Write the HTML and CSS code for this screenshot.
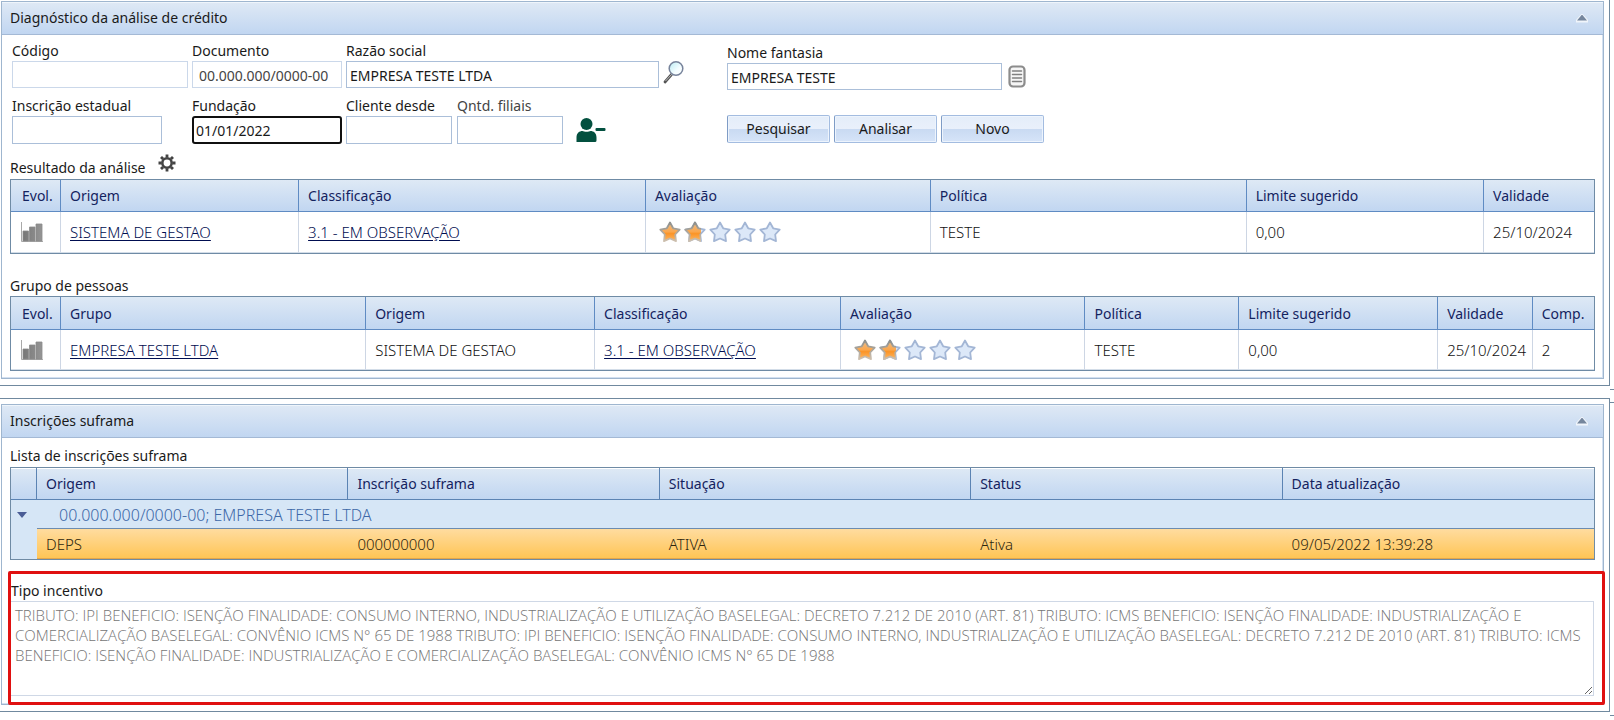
FILE: index.html
```html
<!DOCTYPE html>
<html lang="pt-BR">
<head>
<meta charset="utf-8">
<title>Análise de crédito</title>
<link rel="stylesheet" href="styles.css">
</head>
<body>
<svg class="defs" aria-hidden="true">
  <defs>
    <linearGradient id="gold" x1="0" y1="0" x2="0" y2="1">
      <stop offset="0" stop-color="#e9bd8c"/><stop offset=".5" stop-color="#fba64c"/><stop offset=".6" stop-color="#fb9426"/><stop offset="1" stop-color="#fdb866"/>
    </linearGradient>
    <linearGradient id="goldEdge" x1="0" y1="0" x2="0" y2="1">
      <stop offset="0" stop-color="#8d8f8c"/><stop offset="1" stop-color="#cdbfae"/>
    </linearGradient>
    <linearGradient id="bar" x1="0" y1="0" x2="1" y2="0">
      <stop offset="0" stop-color="#777"/><stop offset="1" stop-color="#959595"/>
    </linearGradient>
    <linearGradient id="lens" x1="0" y1="0" x2="1" y2="1">
      <stop offset="0" stop-color="#b9ecf3"/><stop offset=".6" stop-color="#f4fdff"/><stop offset="1" stop-color="#fff"/>
    </linearGradient>
    <path id="star" d="M11 1.500 L14.200 7.300 L20.700 8.600 L16.200 13.500 L17 20.100 L11 17.500 L5 20.100 L5.800 13.500 L1.300 8.600 L7.800 7.300 Z"/>
    <clipPath id="most"><rect width="17" height="22"/></clipPath>
    <symbol id="off" viewBox="0 0 22 22"><use href="#star" fill="#dce8f8" stroke="#a3b6d5" stroke-width="1.800" stroke-linejoin="round"/></symbol>
    <symbol id="on" viewBox="0 0 22 22"><use href="#star" fill="url(#gold)" stroke="url(#goldEdge)" stroke-width="1.800" stroke-linejoin="round"/></symbol>
    <symbol id="rating" viewBox="0 0 122 22">
      <use href="#on" width="22" height="22"/>
      <use href="#off" x="25" width="22" height="22"/>
      <g transform="translate(25 0)" clip-path="url(#most)"><use href="#on" width="22" height="22"/></g>
      <use href="#off" x="50" width="22" height="22"/>
      <use href="#off" x="75" width="22" height="22"/>
      <use href="#off" x="100" width="22" height="22"/>
    </symbol>
    <symbol id="chart" viewBox="0 0 22 20">
      <path d="M.5 0V19.500H22" fill="none" stroke="#a9a9a9"/>
      <path d="M2 9h5.500V19H2zM8.500 5h5.500v14H8.500zM15 2h6v17h-6z" fill="url(#bar)" stroke="#8c8c8c" stroke-width=".8"/>
    </symbol>
  </defs>
</svg>

<main class="page">
  <div class="frame">
    <section class="panel">
      <header class="panel-head"><h2>Diagnóstico da análise de crédito</h2><button class="toggle" type="button" aria-label="Recolher"></button></header>
      <div class="panel-body">
        <form class="filters">
          <div class="left">
            <div class="row">
              <div class="field w-code"><label for="codigo">Código</label><input id="codigo" class="soft" readonly></div>
              <div class="field w-doc"><label for="doc">Documento</label><input id="doc" class="soft indent" value="00.000.000/0000-00" readonly></div>
              <div class="field w-name"><label for="razao">Razão social</label><input id="razao" value="EMPRESA TESTE LTDA"></div>
              <button class="icon" type="button" aria-label="Buscar">
                <svg width="22" height="24" viewBox="0 0 22 24"><path d="M8.500 14.500L2 22" stroke="#555" stroke-width="2.800" stroke-linecap="round"/><path d="M9 14L2.500 21" stroke="#bbb" stroke-width="1"/><circle cx="13" cy="8.500" r="6.800" fill="url(#lens)" stroke="#77839b" stroke-width="1.500"/></svg>
              </button>
            </div>
            <div class="row">
              <div class="field w-code"><label for="ie">Inscrição estadual</label><input id="ie" class="w-150"></div>
              <div class="field w-doc"><label for="fund">Fundação</label><input id="fund" class="active" value="01/01/2022"></div>
              <div class="field w-small"><label for="cli">Cliente desde</label><input id="cli"></div>
              <div class="field w-small"><label class="gray" for="fil">Qntd. filiais</label><input id="fil"></div>
              <button class="icon person" type="button" aria-label="Remover pessoa">
                <svg width="30" height="26" viewBox="0 0 30 26"><g fill="#03503f"><circle cx="10.500" cy="7" r="6"/><path d="M.5 25v-4.500C.5 16 3.500 14 6.500 14c1.500 1 6.500 1 8 0 3 0 6 2 6 6.500V23.500q0 1.500-1.500 1.500z"/><rect x="19.500" y="11" width="10" height="3" rx="1"/></g></svg>
              </button>
            </div>
          </div>
          <div class="right">
            <div class="row">
              <div class="field w-fan"><label for="fan">Nome fantasia</label><input id="fan" value="EMPRESA TESTE"></div>
              <button class="icon list" type="button" aria-label="Lista">
                <svg width="18" height="23" viewBox="0 0 18 23"><rect x="1.500" y="1.500" width="15" height="20" rx="3.500" fill="#f6f6f6" stroke="#8c8c8c" stroke-width="2.200"/><path d="M4.500 6h9M4.500 9.500h9M4.500 13h9M4.500 16.500h9" stroke="#808080" stroke-width="1.500" stroke-linecap="round"/></svg>
              </button>
            </div>
            <div class="actions"><button class="btn" type="button">Pesquisar</button><button class="btn" type="button">Analisar</button><button class="btn" type="button">Novo</button></div>
          </div>
        </form>

        <div class="caption first"><h3>Resultado da análise</h3>
          <button class="icon gear" type="button" aria-label="Configurar">
            <svg width="18" height="18" viewBox="0 0 18 18"><circle cx="9" cy="9" r="4.700" fill="none" stroke="#444" stroke-width="2.600"/><g stroke="#444" stroke-width="2.800"><path d="M9 .5V3.500M9 14.500v3M.5 9h3M14.500 9h3M3 3l2.100 2.100M12.900 12.900L15 15M3 15l2.100-2.100M12.900 5.100L15 3"/></g></svg>
          </button>
        </div>
        <table class="grid">
          <colgroup><col class="c-evol"><col class="a1"><col class="a2"><col class="a3"><col class="a4"><col class="a5"><col></colgroup>
          <thead><tr><th>Evol.</th><th>Origem</th><th>Classificação</th><th>Avaliação</th><th>Política</th><th>Limite sugerido</th><th>Validade</th></tr></thead>
          <tbody><tr><td><svg class="chart" width="22" height="20"><use href="#chart"/></svg></td><td><a href="#">SISTEMA DE GESTAO</a></td><td><a href="#">3.1 - EM OBSERVAÇÃO</a></td><td><svg class="stars" width="122" height="22"><use href="#rating"/></svg></td><td>TESTE</td><td>0,00</td><td>25/10/2024</td></tr></tbody>
        </table>

        <div class="caption second"><h3>Grupo de pessoas</h3></div>
        <table class="grid people">
          <colgroup><col class="c-evol"><col class="b1"><col class="b2"><col class="b3"><col class="b4"><col class="b5"><col class="b6"><col class="b7"><col></colgroup>
          <thead><tr><th>Evol.</th><th>Grupo</th><th>Origem</th><th>Classificação</th><th>Avaliação</th><th>Política</th><th>Limite sugerido</th><th>Validade</th><th>Comp.</th></tr></thead>
          <tbody><tr><td><svg class="chart" width="22" height="20"><use href="#chart"/></svg></td><td><a href="#">EMPRESA TESTE LTDA</a></td><td>SISTEMA DE GESTAO</td><td><a href="#">3.1 - EM OBSERVAÇÃO</a></td><td><svg class="stars" width="122" height="22"><use href="#rating"/></svg></td><td>TESTE</td><td>0,00</td><td>25/10/2024</td><td>2</td></tr></tbody>
        </table>
      </div>
    </section>
  </div>
  <div class="gap"></div>
  <div class="frame lower">
    <section class="panel">
      <header class="panel-head"><h2>Inscrições suframa</h2><button class="toggle" type="button" aria-label="Recolher"></button></header>
      <div class="panel-body">
        <div class="caption list-cap"><h3>Lista de inscrições suframa</h3></div>
        <table class="grid tree">
          <colgroup><col class="c-tree"><col><col><col><col><col></colgroup>
          <thead><tr><th></th><th>Origem</th><th>Inscrição suframa</th><th>Situação</th><th>Status</th><th>Data atualização</th></tr></thead>
          <tbody>
            <tr class="group"><td rowspan="2"><button class="expander" type="button" aria-label="Recolher grupo"></button></td><td colspan="5">00.000.000/0000-00; EMPRESA TESTE LTDA</td></tr>
            <tr class="selected"><td>DEPS</td><td>000000000</td><td>ATIVA</td><td>Ativa</td><td>09/05/2022 13:39:28</td></tr>
          </tbody>
        </table>
        <div class="incentive">
          <label for="tipo">Tipo incentivo</label>
          <textarea id="tipo" readonly>TRIBUTO: IPI BENEFICIO: ISENÇÃO FINALIDADE: CONSUMO INTERNO, INDUSTRIALIZAÇÃO E UTILIZAÇÃO BASELEGAL: DECRETO 7.212 DE 2010 (ART. 81) TRIBUTO: ICMS BENEFICIO: ISENÇÃO FINALIDADE: INDUSTRIALIZAÇÃO E COMERCIALIZAÇÃO BASELEGAL: CONVÊNIO ICMS N° 65 DE 1988 TRIBUTO: IPI BENEFICIO: ISENÇÃO FINALIDADE: CONSUMO INTERNO, INDUSTRIALIZAÇÃO E UTILIZAÇÃO BASELEGAL: DECRETO 7.212 DE 2010 (ART. 81) TRIBUTO: ICMS BENEFICIO: ISENÇÃO FINALIDADE: INDUSTRIALIZAÇÃO E COMERCIALIZAÇÃO BASELEGAL: CONVÊNIO ICMS N° 65 DE 1988</textarea>
        </div>
      </div>
    </section>
  </div>
  <div class="tail"></div>
</main>
</body>
</html>
```
FILE: styles.css
```css
* { box-sizing: border-box; }
body { margin: 0; background: #fff; color: #1a1a1a; font: 14px/20px "Noto Sans", "Open Sans", sans-serif; }
h2, h3 { margin: 0; font-size: inherit; font-weight: inherit; }
button, input, textarea { font: inherit; color: inherit; margin: 0; }
.defs { display: block; width: 0; height: 0; }

.page { overflow: hidden; }
.frame { margin-right: 4px; padding: 1px 5px 6px 1px; border-right: 1px solid #70899f; border-bottom: 1px solid #70899f; }
.frame.lower { padding-top: 5px; border-top: 1px solid #70899f; }
.gap { width: 4px; height: 12px; margin-left: auto; position: relative; }
.gap::before { content: ""; position: absolute; inset: 3px 0 -5px; border: solid #70899f; border-width: 1px 0; }
.tail { width: 4px; height: 4px; margin-left: auto; border-bottom: 1px solid #70899f; }

.panel { border: 1px solid #9fb6cf; box-shadow: inset -1px -1px #d3e0f0; }
.panel-head { display: flex; align-items: center; justify-content: space-between; height: 33px; padding: 0 15px 0 8px; border-bottom: 1px solid #a4b9d5; background: linear-gradient(#dfe9f5, #c1d6f1); box-shadow: inset 0 1px #eff5fb; }
.toggle { width: 12px; height: 9px; padding: 0; border: 0; background: #f0f5fb; clip-path: polygon(50% 0, 100% 70%, 100% 100%, 0 100%, 0 70%); position: relative; }
.toggle::after { content: ""; position: absolute; inset: 1px 1px 2px; background: #75869d; clip-path: polygon(50% 0, 100% 100%, 0 100%); }
.panel-body { padding: 0 8px 7px; }

.filters { display: flex; gap: 42px; padding: 4px 0 0 2px; }
.left, .right { display: flex; flex-direction: column; gap: 6px; }
.right { padding-top: 2px; }
.row { display: flex; gap: 4px; align-items: flex-end; }
.field { display: flex; flex-direction: column; }
.field label { padding: 2px 0 0; }
.field input { width: 100%; height: 27px; padding: 1px 3px 0; border: 1px solid #abbfd9; background: #fff; outline: 0; }
.row + .row input { height: 28px; }
.field .soft { border-color: #cbd8ea; color: #444; }
.field .indent { padding-left: 6px; }
.field .active { border: 2px solid #101010; border-radius: 3px; padding: 0 2px; }
.field .w-150 { width: 150px; }
.gray { color: #444; }
.w-code { width: 176px; }
.w-doc { width: 150px; }
.w-name { width: 313px; }
.w-small { width: 106px; }
.w-small + .w-small { margin-left: 1px; }
.w-fan { width: 275px; }
.icon { display: flex; padding: 0; border: 0; background: none; margin-bottom: 4px; }
.person { margin: 0 0 1px 9px; }
.list { margin: 0 0 2px 2px; }
.actions { display: flex; gap: 4px; margin-top: 19px; }
.btn { width: 103px; height: 28px; padding: 0; border: 1px solid #a3bce0; border-left-color: #7f9cc6; border-radius: 2px; background: linear-gradient(#e4edf9, #e9f0fb 50%, #c9daf2 51%, #d6e4f8); box-shadow: inset 0 0 0 1px #edf4fd; }

.caption { display: flex; gap: 12px; align-items: flex-end; padding-bottom: 1px; }
.caption.first { height: 35px; }
.caption.second { height: 42px; padding-bottom: 0; }
.caption.list-cap { height: 29px; }
.gear { margin-bottom: 6px; }

.grid { width: 100%; table-layout: fixed; border-collapse: separate; border-spacing: 0; border: 1px solid #6f8ba5; }
.grid th { height: 32px; padding: 1px 9px 0; border-right: 1px solid #5f8bc3; border-bottom: 1px solid #5f8bc3; background: linear-gradient(#dee9f5, #c1d6f1); color: #14235f; font-weight: inherit; text-align: left; white-space: nowrap; }
.grid td { height: 41px; padding: 0 9px; border-right: 1px solid #cdd6e4; border-bottom: 1px solid #d3dde8; color: #111; font-size: 15px; font-weight: 300; white-space: nowrap; }
.people th { height: 33px; }
.people td { height: 40px; }
.grid th:last-child, .grid td:last-child { border-right: 0; }
.grid th:first-child { padding-left: 11px; padding-right: 0; }
.grid td:first-child { padding-left: 10px; }
.grid a { color: #000d50; text-underline-offset: 2px; }
.chart, .stars { display: block; }
.stars { margin-left: 4px; }
.c-evol { width: 50px; }
.a1 { width: 15.040%; } .a2 { width: 21.910%; } .a3 { width: 18%; } .a4 { width: 19.950%; } .a5 { width: 15%; }
.b1 { width: 19.280%; } .b2 { width: 14.460%; } .b3 { width: 15.530%; } .b4 { width: 15.450%; } .b5 { width: 9.720%; } .b6 { width: 12.560%; } .b7 { width: 5.970%; }

.tree .c-tree { width: 26px; }
.tree th { border-color: #5b83b3; box-shadow: inset 0 1px #fff; }
.tree td { border: 0; }
.tree .group td { height: 29px; background: #d6e6f6; color: #3d68a8; font-size: 16px; border-bottom: 1px solid #6c8cb0; }
.tree .group td + td { padding: 1px 0 0 22px; }
.tree .group td:first-child { padding: 12px 0 0 6px; vertical-align: top; border: 0; }
.tree .selected td { height: 30px; padding-left: 9px; background: linear-gradient(#ffdc9f, #ffc556); border-bottom: 1px solid #e3a64b; color: #2d260f; }
.expander { display: block; width: 10px; height: 6px; padding: 0; border: 0; background: #4a5d96; clip-path: polygon(0 0, 100% 0, 50% 100%); }

.incentive { display: flex; flex-direction: column; margin: 11px -10px -8px -2px; border: 3px solid #e01010; border-radius: 2px; padding: 7px 8px 6px 0; position: relative; }
.incentive textarea { display: block; width: 100%; height: 95px; padding: 3px 4px; border: 1px solid #cfd8e6; border-left: 0; color: #757575; background: #fff; outline: 0; resize: vertical; font: 300 15px/20px "Open Sans", "Noto Sans", sans-serif; }
```
